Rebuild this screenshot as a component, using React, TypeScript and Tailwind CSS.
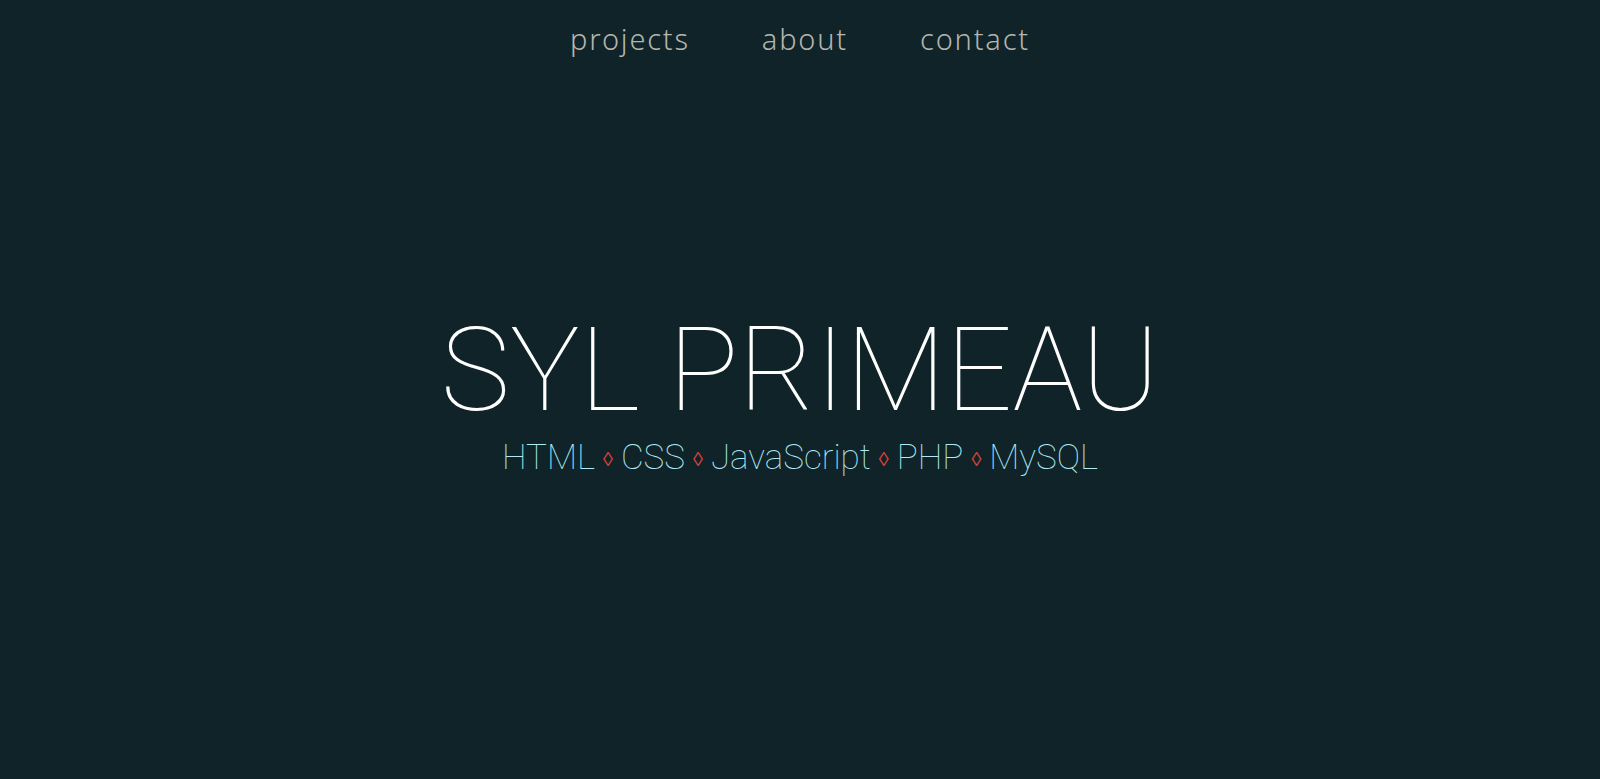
const links = ["projects", "about", "contact"];

const skills = ["HTML", "CSS", "JavaScript", "PHP", "MySQL"];

export default function App() {
  return (
    <div className="flex h-screen flex-col bg-[#0f2329] font-['Roboto',sans-serif]">
      <nav className="flex justify-center gap-[72px] pt-[17px]">
        {links.map((l) => (
          <a
            key={l}
            href="#"
            className="font-['Noto_Sans',sans-serif] text-[29px] font-light leading-[44px] tracking-[1.8px] text-[#b4b5ad]"
          >
            {l}
          </a>
        ))}
      </nav>

      <main className="flex flex-1 flex-col items-center justify-center pb-[53px]">
        <h1 className="text-[117px] font-thin leading-none text-white">SYL PRIMEAU</h1>
        <p className="mt-[11px] text-[35px] font-thin leading-none text-[#aeeaf6]">
          {skills.map((s, i) => (
            <span key={s}>
              {i > 0 && (
                <span className="px-[8px] align-[3px] font-['DejaVu_Sans',sans-serif] text-[20px] text-[#e0423c]">
                  ◊
                </span>
              )}
              {s}
            </span>
          ))}
        </p>
      </main>
    </div>
  );
}
